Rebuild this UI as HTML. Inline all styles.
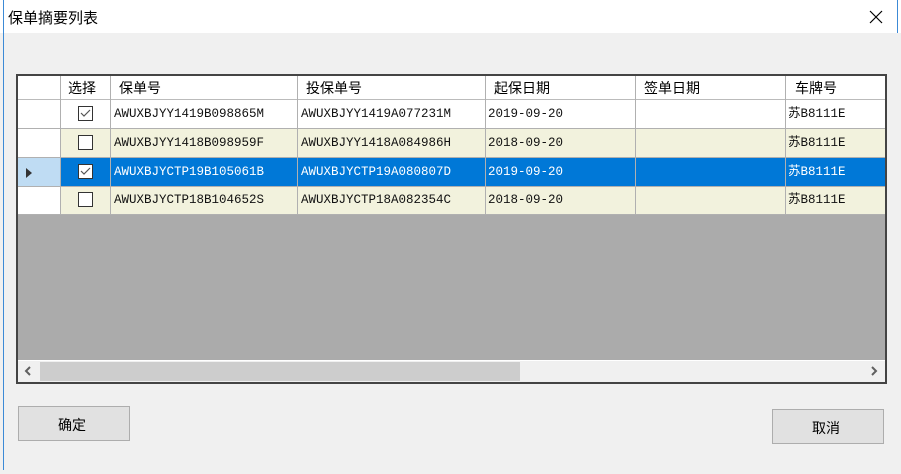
<!DOCTYPE html>
<html><head><meta charset="utf-8"><style>
*{margin:0;padding:0;box-sizing:border-box}
body{width:901px;height:474px;background:#f0f0f0;position:relative;overflow:hidden;font-family:"Liberation Sans","Noto Sans CJK SC",sans-serif}
.abs{position:absolute}
.t{font-size:14px;color:#000;white-space:nowrap}
.m{font-family:"Liberation Mono","Noto Sans CJK SC",monospace;font-size:12.5px;line-height:15px;height:15px;white-space:nowrap;color:#111}
.cb{position:absolute;width:15px;height:15px;border:1px solid #333;background:#fff}
</style></head><body>
<div class="abs" style="left:0;top:0;width:901px;height:33px;background:#fff"></div>
<div class="abs" style="left:3px;top:0;width:1px;height:470px;background:#3c8ad6"></div>
<div class="abs" style="left:897px;top:0;width:1px;height:33px;background:#3c8ad6"></div>
<div class="abs t" style="left:8px;top:7px;font-size:15px">保单摘要列表</div>
<svg class="abs" style="left:868px;top:9px" width="16" height="16"><path d="M2 2L14 14M14 2L2 14" stroke="#000" stroke-width="1.2"/></svg>

<div class="abs" style="left:16px;top:74px;width:871px;height:310px;border:2px solid #444;background:#ababab"></div>
<div class="abs" style="left:18px;top:76px;width:867px;height:24px;background:#fff;border-bottom:1px solid #bbb"></div>
<div class="abs" style="left:18px;top:100px;width:867px;height:29px;background:#fff"></div>
<div class="abs" style="left:61px;top:129px;width:824px;height:29px;background:#f2f2dd"></div>
<div class="abs" style="left:18px;top:129px;width:43px;height:29px;background:#fff"></div>
<div class="abs" style="left:18px;top:158px;width:43px;height:29px;background:#bfdcf3"></div>
<div class="abs" style="left:61px;top:158px;width:824px;height:29px;background:#0078d7"></div>
<div class="abs" style="left:61px;top:187px;width:824px;height:28px;background:#f2f2dd"></div>
<div class="abs" style="left:18px;top:187px;width:43px;height:28px;background:#fff"></div>
<div class="abs" style="left:18px;top:128px;width:867px;height:1px;background:#b0b0b0"></div>
<div class="abs" style="left:18px;top:157px;width:867px;height:1px;background:#b0b0b0"></div>
<div class="abs" style="left:18px;top:186px;width:867px;height:1px;background:#b0b0b0"></div>
<div class="abs" style="left:18px;top:214px;width:867px;height:1px;background:#b0b0b0"></div>
<div class="abs" style="left:60px;top:76px;width:1px;height:139px;background:#b0b0b0"></div>
<div class="abs" style="left:110px;top:76px;width:1px;height:139px;background:#b0b0b0"></div>
<div class="abs" style="left:297px;top:76px;width:1px;height:139px;background:#b0b0b0"></div>
<div class="abs" style="left:485px;top:76px;width:1px;height:139px;background:#b0b0b0"></div>
<div class="abs" style="left:635px;top:76px;width:1px;height:139px;background:#b0b0b0"></div>
<div class="abs" style="left:785px;top:76px;width:1px;height:139px;background:#b0b0b0"></div>

<div class="abs t" style="left:68px;top:78px">选择</div>
<div class="abs t" style="left:119px;top:78px">保单号</div>
<div class="abs t" style="left:306px;top:78px">投保单号</div>
<div class="abs t" style="left:494px;top:78px">起保日期</div>
<div class="abs t" style="left:644px;top:78px">签单日期</div>
<div class="abs t" style="left:795px;top:78px">车牌号</div>

<div class="cb" style="left:78px;top:106px"><svg width="13" height="13" style="position:absolute;left:0;top:0"><path d="M2 6L5 9L11 3" stroke="#555" fill="none" stroke-width="1.2"/></svg></div>
<div class="cb" style="left:78px;top:135px"></div>
<div class="cb" style="left:78px;top:164px"><svg width="13" height="13" style="position:absolute;left:0;top:0"><path d="M2 6L5 9L11 3" stroke="#555" fill="none" stroke-width="1.2"/></svg></div>
<div class="cb" style="left:78px;top:192px"></div>
<svg class="abs" style="left:25px;top:167px" width="8" height="12"><path d="M1 1L7 6L1 11Z" fill="#333"/></svg>

<div class="abs m" style="left:114px;top:107px">AWUXBJYY1419B098865M</div>
<div class="abs m" style="left:301px;top:107px">AWUXBJYY1419A077231M</div>
<div class="abs m" style="left:488px;top:107px">2019-09-20</div>
<div class="abs m" style="left:788px;top:107px">苏B8111E</div>
<div class="abs m" style="left:114px;top:136px">AWUXBJYY1418B098959F</div>
<div class="abs m" style="left:301px;top:136px">AWUXBJYY1418A084986H</div>
<div class="abs m" style="left:488px;top:136px">2018-09-20</div>
<div class="abs m" style="left:788px;top:136px">苏B8111E</div>
<div class="abs m" style="left:114px;top:165px;color:#fff">AWUXBJYCTP19B105061B</div>
<div class="abs m" style="left:301px;top:165px;color:#fff">AWUXBJYCTP19A080807D</div>
<div class="abs m" style="left:488px;top:165px;color:#fff">2019-09-20</div>
<div class="abs m" style="left:788px;top:165px;color:#fff">苏B8111E</div>
<div class="abs m" style="left:114px;top:193px">AWUXBJYCTP18B104652S</div>
<div class="abs m" style="left:301px;top:193px">AWUXBJYCTP18A082354C</div>
<div class="abs m" style="left:488px;top:193px">2018-09-20</div>
<div class="abs m" style="left:788px;top:193px">苏B8111E</div>

<div class="abs" style="left:18px;top:360px;width:867px;height:22px;background:#f0f0f0;border-top:1px solid #fff"></div>
<div class="abs" style="left:40px;top:362px;width:480px;height:19px;background:#cdcdcd"></div>
<svg class="abs" style="left:24px;top:366px" width="8" height="10"><path d="M6 1L2 5L6 9" stroke="#606060" fill="none" stroke-width="2"/></svg>
<svg class="abs" style="left:870px;top:366px" width="8" height="10"><path d="M2 1L6 5L2 9" stroke="#606060" fill="none" stroke-width="2"/></svg>

<div class="abs" style="left:18px;top:406px;width:112px;height:35px;background:#e1e1e1;border:1px solid #adadad"></div>
<div class="abs t" style="left:58px;top:415px">确定</div>
<div class="abs" style="left:772px;top:409px;width:112px;height:35px;background:#e1e1e1;border:1px solid #adadad"></div>
<div class="abs t" style="left:812px;top:418px">取消</div>
</body></html>
